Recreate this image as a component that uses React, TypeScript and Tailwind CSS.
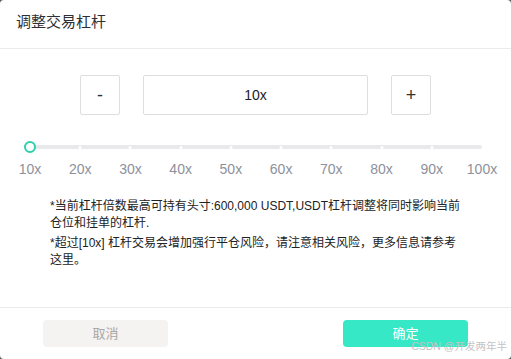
import React, { useState } from "react";

const marks = [10, 20, 30, 40, 50, 60, 70, 80, 90, 100];

const App = () => {
  const [leverage, setLeverage] = useState<number>(10);

  return (
    <div
      className="w-[511px] h-[359px] bg-[#5a5a5a]"
      style={{ fontFamily: '"Liberation Sans", "Noto Sans CJK SC", sans-serif' }}
    >
      <div className="relative w-full h-full bg-white rounded-[4px] flex flex-col overflow-hidden">
        {/* 标题 */}
        <div className="h-[49px] shrink-0 border-b border-[#ebebeb] flex items-center px-4 pb-[4px]">
          <h1 className="text-[15px] text-[#2b2f36]">调整交易杠杆</h1>
        </div>

        {/* 内容 */}
        <div className="flex-1 flex flex-col">
          <div className="mt-[26px] flex justify-center gap-[23px]">
            <button
              className="w-[40px] h-[40px] border border-[#dedede] rounded-[2px] text-[18px] text-[#333] flex items-center justify-center"
              onClick={() => setLeverage(Math.max(1, leverage - 1))}
            >
              -
            </button>
            <div className="w-[225px] h-[40px] border border-[#dedede] rounded-[2px] text-[14px] text-[#222] flex items-center justify-center">
              {leverage}x
            </div>
            <button
              className="w-[40px] h-[40px] border border-[#dedede] rounded-[2px] text-[18px] text-[#333] flex items-center justify-center"
              onClick={() => setLeverage(Math.min(100, leverage + 1))}
            >
              +
            </button>
          </div>

          {/* 滑块 */}
          <div className="relative ml-[30px] w-[452px] h-[46px] mt-[30px]">
            <div className="absolute left-0 right-0 top-0 h-[4px] rounded-full bg-[#e9e9eb]" />
            {marks.map((m, i) => (
              <div
                key={m}
                className="absolute top-0 -translate-x-1/2"
                style={{ left: `${(i / 9) * 100}%` }}
              >
                {i > 0 && i < 9 && (
                  <div className="mx-auto mt-[1px] w-[3px] h-[3px] rounded-full bg-white" />
                )}
              </div>
            ))}
            {marks.map((m, i) => (
              <div
                key={"l" + m}
                className="absolute top-[14px] -translate-x-1/2 text-[14px] text-[#8d919c]"
                style={{ left: `${(i / 9) * 100}%` }}
              >
                {m}x
              </div>
            ))}
            <div className="absolute left-0 top-[-4px] -translate-x-1/2 w-[12px] h-[12px] rounded-full border-2 border-[#2ccfa9] bg-white" />
          </div>

          {/* 提示 */}
          <div className="ml-[50px] w-[416px] mt-[7px] text-[12px] leading-[17px] text-[#222]">
            <p>*当前杠杆倍数最高可持有头寸:600,000 USDT,USDT杠杆调整将同时影响当前仓位和挂单的杠杆.</p>
            <p className="mt-[3px]">
              *超过[10x] 杠杆交易会增加强行平仓风险，请注意相关风险，更多信息请参考这里。
            </p>
          </div>
        </div>

        {/* 底部按钮 */}
        <div className="h-[52px] shrink-0 border-t border-[#ebebeb] flex items-center justify-between px-[43px]">
          <button className="w-[125px] h-[27px] rounded-[4px] bg-[#f5f2f2] text-[13px] text-[#a8a8a8]">
            取消
          </button>
          <button className="w-[125px] h-[27px] rounded-[4px] bg-[#36e8c6] text-[13px] text-white">
            确定
          </button>
        </div>

        <div className="absolute right-[4px] bottom-[4px] text-[10.5px] text-[#c4c4c4]">
          CSDN @开发两年半
        </div>
      </div>
    </div>
  );
};

export default App;
